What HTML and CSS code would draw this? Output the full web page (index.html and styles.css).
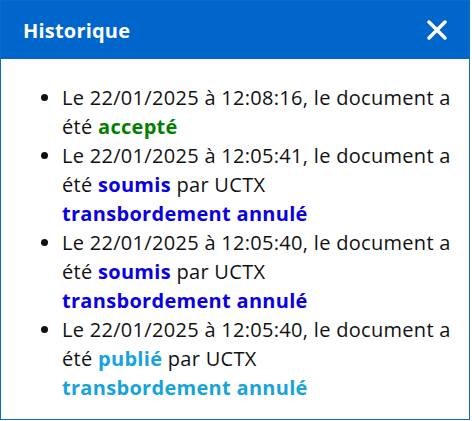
FILE: index.html
```html
<!DOCTYPE html>
<html lang="fr">
<head>
<meta charset="utf-8">
<link rel="stylesheet" href="styles.css">
</head>
<body>
<div class="dialog">
  <div class="header">
    <span class="title">Historique</span>
    <svg class="close" width="20" height="20" viewBox="0 0 20 20"><path d="M2 2 L18 18 M18 2 L2 18" stroke="#fff" stroke-width="3.4" stroke-linecap="round"/></svg>
  </div>
  <div class="body">
    <ul class="list">
      <li>Le 22/01/2025 à 12:08:16, le document a été <b class="green">accepté</b></li>
      <li>Le 22/01/2025 à 12:05:41, le document a été <b class="blue">soumis</b> par UCTX<br><b class="blue">transbordement annulé</b></li>
      <li>Le 22/01/2025 à 12:05:40, le document a été <b class="blue">soumis</b> par UCTX<br><b class="blue">transbordement annulé</b></li>
      <li>Le 22/01/2025 à 12:05:40, le document a été <b class="cyan">publié</b> par UCTX<br><b class="cyan">transbordement annulé</b></li>
    </ul>
  </div>
</div>
</body>
</html>
```
FILE: styles.css
```css
html, body { margin: 0; padding: 0; background: #fff; }
body { font-family: "Open Sans", "Noto Sans", sans-serif; }
.dialog {
  width: 470px;
  height: 420px;
  box-sizing: border-box;
  border: 1px solid #0a6ad0;
  display: flex;
  flex-direction: column;
}
.header {
  background: #0066cc;
  height: 58px;
  flex: none;
  display: flex;
  align-items: center;
  justify-content: space-between;
  padding: 0 22px 0 22px;
}
.title { color: #fff; font-weight: 700; font-size: 20px; letter-spacing: 0.2px; }
.close { display: block; }
.body { padding: 24px 10px 0 0; }
.list {
  margin: 0;
  padding-left: 61px;
  font-size: 20px;
  line-height: 29px;
  color: #111;
  letter-spacing: 0.3px;
}
.green { color: #008000; }
.blue { color: #0a00e6; }
.cyan { color: #17a3db; }
```
